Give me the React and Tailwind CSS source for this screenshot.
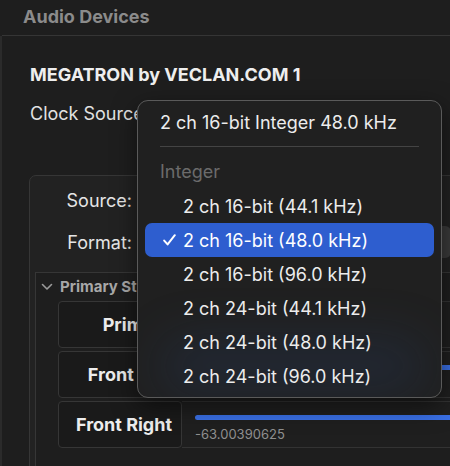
import React from "react";

const FONT = { fontFamily: "Inter, 'Noto Sans', 'Liberation Sans', sans-serif" };

const formats = [
  { label: "2 ch 16-bit (44.1 kHz)" },
  { label: "2 ch 16-bit (48.0 kHz)", selected: true },
  { label: "2 ch 16-bit (96.0 kHz)" },
  { label: "2 ch 24-bit (44.1 kHz)" },
  { label: "2 ch 24-bit (48.0 kHz)" },
  { label: "2 ch 24-bit (96.0 kHz)" },
];

const CheckIcon = () => (
  <svg width="13" height="12" viewBox="0 0 13 12" fill="none">
    <path
      d="M1.2 6.6 L4.6 10.4 L11.8 1.2"
      stroke="#ffffff"
      strokeWidth="2"
      strokeLinecap="round"
      strokeLinejoin="round"
    />
  </svg>
);

const Chevron = () => (
  <svg width="12" height="8" viewBox="0 0 12 8" fill="none">
    <path
      d="M1.5 1.5 L6 6 L10.5 1.5"
      stroke="#9a9a9a"
      strokeWidth="1.6"
      strokeLinecap="round"
      strokeLinejoin="round"
    />
  </svg>
);

const FormatMenu = () => (
  <div className="absolute left-[137px] top-[100px] w-[305px] h-[298px] rounded-[11px] border border-[#5a5a5a] bg-[#202020] pt-[4px] pb-[6px] overflow-hidden shadow-[0_8px_24px_rgba(0,0,0,0.5)]">
    <div className="absolute left-[20px] top-[235px] w-[270px] h-[60px] rounded-full bg-[#2a4f99]/15 blur-xl" />
    <div className="relative h-[34px] flex items-center pl-[22px] text-[18px] text-[#ececec]">
      2 ch 16-bit Integer 48.0 kHz
    </div>
    <div className="relative h-[14px] flex items-center px-[22px]">
      <div className="h-px w-full bg-[#444444]" />
    </div>
    <div className="relative h-[36px] flex items-center pl-[22px] text-[18px] text-[#6b6b6b]">
      Integer
    </div>
    {formats.map((item) => (
      <div key={item.label} className="relative h-[34px] px-[7px]">
        <div
          className={`h-full rounded-[7px] flex items-center text-[18px] text-[#ececec] ${
            item.selected ? "bg-[#2e5ecf] text-white" : ""
          }`}
        >
          <div className="w-[38px] flex justify-end pr-[7px]">
            {item.selected && <CheckIcon />}
          </div>
          {item.label}
        </div>
      </div>
    ))}
  </div>
);

const ChannelRow = ({ label, bar, value }) => (
  <div className="flex h-[47px]">
    <div className="w-[124px] shrink-0 rounded-[4px] border border-[#363636] bg-[#1a1a1a] flex items-center justify-end pr-[9px] text-[18px] font-bold text-[#ededed] whitespace-nowrap">
      {label}
    </div>
    <div className="flex-1 border-y border-[#333333] bg-[#1f1f1f] pl-[13px] pt-[13px]">
      {bar && <div className="h-[5px] rounded-l-full bg-[#3a70e6]" />}
      {value && (
        <div className="mt-[5px] text-[13px] text-[#8f8f8f]">{value}</div>
      )}
    </div>
  </div>
);

export default function App() {
  return (
    <div
      className="relative w-[450px] h-[466px] overflow-hidden bg-[#1e1e1e]"
      style={FONT}
    >
      <div className="h-[36px] border-b border-[#353535] ml-[2px] pl-[21px] pb-[3px] flex items-center text-[18px] font-bold text-[#8b8b8b]">
        Audio Devices
      </div>

      <div className="border-l-[2px] border-[#2b2b2b] h-[430px]">
        <div className="pl-[28px] pt-[28px]">
          <div className="h-[22px] leading-[22px] text-[18px] font-bold text-[#eeeeee]">
            MEGATRON by VECLAN.COM 1
          </div>
          <div className="mt-[17px] h-[22px] leading-[22px] text-[18px] text-[#e2e2e2]">
            Clock Source:
          </div>
        </div>

        <div className="ml-[27px] mt-[50px] w-[440px] h-[300px] rounded-tl-[7px] border border-[#363636] bg-[#222222]">
          <div className="flex items-center h-[46px] pt-[2px]">
            <div className="w-[102px] text-right text-[18px] text-[#e6e6e6]">
              Source:
            </div>
            <div className="ml-[10px] w-[240px] h-[28px] rounded-[6px] bg-[#3a3a3a]" />
          </div>
          <div className="flex items-center h-[40px]">
            <div className="w-[102px] text-right text-[18px] text-[#e6e6e6]">
              Format:
            </div>
            <div className="ml-[10px] w-[309px] h-[32px] rounded-[6px] bg-[#3a3a3a]" />
          </div>

          <div className="ml-[5px] mt-[10px] border border-[#363636] bg-[#1e1e1e] h-[220px]">
            <div className="h-[28px] flex items-center pl-[5px] gap-[7px]">
              <Chevron />
              <span className="text-[15px] font-bold text-[#a8a8a8]">
                Primary Streams
              </span>
            </div>
            <div className="ml-[22px] flex flex-col gap-[3px]">
              <ChannelRow label="Primary" />
              <ChannelRow label="Front Left" bar />
              <ChannelRow label="Front Right" bar value="-63.00390625" />
            </div>
          </div>
        </div>
      </div>

      <FormatMenu />
    </div>
  );
}
